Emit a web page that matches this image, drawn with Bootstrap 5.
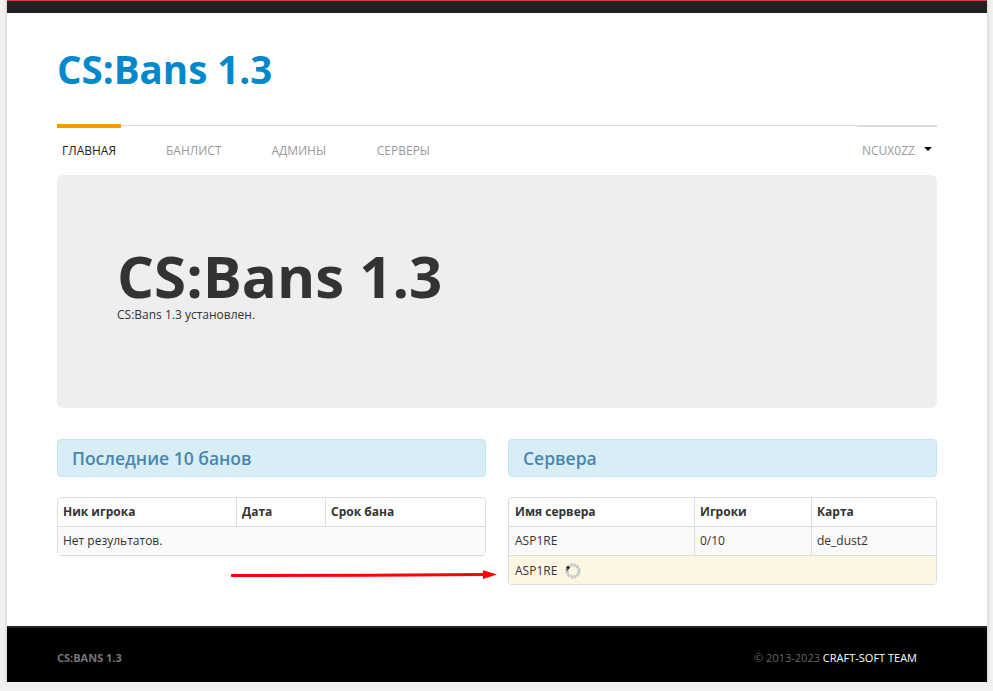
<!DOCTYPE html>
<html lang="ru">
<head>
    <meta charset="UTF-8">
    <meta name="viewport" content="width=device-width, initial-scale=1.0">
    <title>CS:Bans 1.3</title>
    <link href="https://cdn.jsdelivr.net/npm/bootstrap@5.3.0/dist/css/bootstrap.min.css" rel="stylesheet">
    <style>
        body {
            background: #f1f1ef;
            font-family: "Open Sans", sans-serif;
            font-size: 12px;
            line-height: 18px;
            color: #333;
        }
        .page-wrap {
            position: relative;
            width: 980px;
            height: 682px;
            margin-left: 7px;
            background: #fff;
            box-shadow: 0 0 4px rgba(0,0,0,0.2);
        }
        .top-strip {
            height: 13px;
            background: #222;
            border-top: 1px solid #c44;
        }
        .page-body {
            height: 613px;
            padding: 0 50px;
        }
        .site-title {
            height: 112px;
            padding-top: 32px;
            margin: 0;
            color: #0088cc;
            font-size: 38.5px;
            line-height: 48px;
            font-weight: 700;
        }
        .main-menu {
            height: 51px;
            border-top: 1px solid #ddd;
        }
        .main-menu a {
            display: block;
            padding: 16px 5px 0;
            color: #999;
            text-decoration: none;
            text-transform: uppercase;
            white-space: nowrap;
        }
        .main-menu .first-item {
            position: relative;
            width: 64px;
            margin-right: 40px;
            color: #222;
        }
        .main-menu .first-item::before {
            content: "";
            position: absolute;
            top: -2px;
            left: 0;
            width: 64px;
            height: 4px;
            background: #ff9900;
        }
        .main-menu .menu-item {
            width: 105.4px;
        }
        .user-box {
            position: relative;
            width: 80px;
            padding: 16px 0 0 5px;
            color: #999;
            white-space: nowrap;
        }
        .user-box::before {
            content: "";
            position: absolute;
            top: -1px;
            left: 0;
            right: 0;
            height: 2px;
            background: #ddd;
        }
        .user-caret {
            position: absolute;
            top: 21px;
            right: 5px;
            border-left: 4px solid transparent;
            border-right: 4px solid transparent;
            border-top: 4px solid #000;
        }
        .hero-box {
            height: 233px;
            margin-top: -1px;
            margin-bottom: 31px;
            padding: 70px 60px 0;
            background: #eee;
            border-radius: 6px;
        }
        .hero-box h1 {
            margin: 0;
            color: #333;
            font-size: 58.2px;
            line-height: 61px;
            font-weight: 700;
        }
        .hero-box p {
            margin: 0;
            line-height: 18px;
        }
        .half-col {
            width: 429px;
        }
        .info-title {
            height: 38px;
            margin: 0 0 20px;
            padding: 0 14px;
            font-size: 17.5px;
            line-height: 37px;
            font-weight: 600;
            color: #4886ad;
            background: #d9edf7;
            border: 1px solid #bce8f1;
            border-radius: 4px;
        }
        .data-table {
            width: 100%;
            border-collapse: separate;
            border-spacing: 0;
            border: 1px solid #ddd;
            border-radius: 4px;
            table-layout: fixed;
        }
        .data-table th, .data-table td {
            height: 29px;
            padding: 0 5px;
            vertical-align: middle;
            border-left: 1px solid #ddd;
            border-top: 1px solid #ddd;
            line-height: 18px;
        }
        .data-table th {
            border-top: 0;
            height: 28px;
            font-weight: 700;
        }
        .data-table th:first-child, .data-table td:first-child {
            border-left: 0;
        }
        .server-table th:first-child, .server-table td:first-child {
            padding-left: 6px;
        }
        .data-table .odd-row td {
            background: #f9f9f9;
        }
        .data-table .load-row td {
            padding-top: 1px;
            background: #fcf6e3;
        }
        .page-foot {
            height: 56px;
            padding: 0 70px 0 50px;
            background: #000;
            border-top: 2px solid #222;
            font-size: 11px;
            line-height: 60px;
            color: #666;
        }
        .foot-brand {
            font-weight: 700;
            color: #777;
        }
        .foot-link {
            color: #fff;
            text-decoration: none;
        }
        .red-arrow {
            position: absolute;
            left: 224px;
            top: 565px;
        }
    </style>
</head>
<body>
    <div class="page-wrap">
        <div class="top-strip"></div>
        <div class="page-body">
            <h1 class="site-title">CS:Bans 1.3</h1>

            <div class="main-menu d-flex justify-content-between">
                <div class="d-flex">
                    <a href="#" class="first-item">Главная</a>
                    <a href="#" class="menu-item">Банлист</a>
                    <a href="#" class="menu-item">Админы</a>
                    <a href="#" class="menu-item">Серверы</a>
                </div>
                <div class="user-box">NCUX0ZZ<span class="user-caret"></span></div>
            </div>

            <div class="hero-box">
                <h1>CS:Bans 1.3</h1>
                <p>CS:Bans 1.3 установлен.</p>
            </div>

            <div class="d-flex justify-content-between">
                <div class="half-col">
                    <h4 class="info-title">Последние 10 банов</h4>
                    <table class="data-table">
                        <colgroup><col style="width:178px"><col style="width:89px"><col></colgroup>
                        <thead>
                            <tr><th>Ник игрока</th><th>Дата</th><th>Срок бана</th></tr>
                        </thead>
                        <tbody>
                            <tr class="odd-row"><td colspan="3">Нет результатов.</td></tr>
                        </tbody>
                    </table>
                </div>
                <div class="half-col">
                    <h4 class="info-title">Сервера</h4>
                    <table class="data-table server-table">
                        <colgroup><col style="width:185px"><col style="width:117px"><col></colgroup>
                        <thead>
                            <tr><th>Имя сервера</th><th>Игроки</th><th>Карта</th></tr>
                        </thead>
                        <tbody>
                            <tr class="odd-row"><td>ASP1RE</td><td>0/10</td><td>de_dust2</td></tr>
                            <tr class="load-row">
                                <td colspan="3">
                                    <span class="d-inline-flex align-items-center gap-2">
                                        ASP1RE
                                        <svg width="16" height="16" viewBox="0 0 16 16">
                                            <circle cx="8" cy="8" r="6" fill="none" stroke="#c8c8c8" stroke-width="3.4" stroke-dasharray="2.4 0.7"/>
                                            <circle cx="3" cy="4.6" r="1.7" fill="#222"/>
                                            <circle cx="2.2" cy="7" r="1.2" fill="#777"/>
                                        </svg>
                                    </span>
                                </td>
                            </tr>
                        </tbody>
                    </table>
                </div>
            </div>
        </div>

        <div class="page-foot d-flex justify-content-between">
            <span class="foot-brand">CS:BANS 1.3</span>
            <span class="foot-copy">© 2013-2023 <a href="#" class="foot-link">CRAFT-SOFT TEAM</a></span>
        </div>

        <svg class="red-arrow" width="270" height="20" viewBox="0 0 270 20">
            <path d="M1 10.6 L140 10.2 L255 9.6" fill="none" stroke="#f00" stroke-width="3" stroke-linecap="round"/>
            <path d="M252 5.3 L266 9.6 L252 14 Z" fill="#f00"/>
        </svg>
    </div>

    <script src="https://cdn.jsdelivr.net/npm/bootstrap@5.3.0/dist/js/bootstrap.bundle.min.js"></script>
</body>
</html>
